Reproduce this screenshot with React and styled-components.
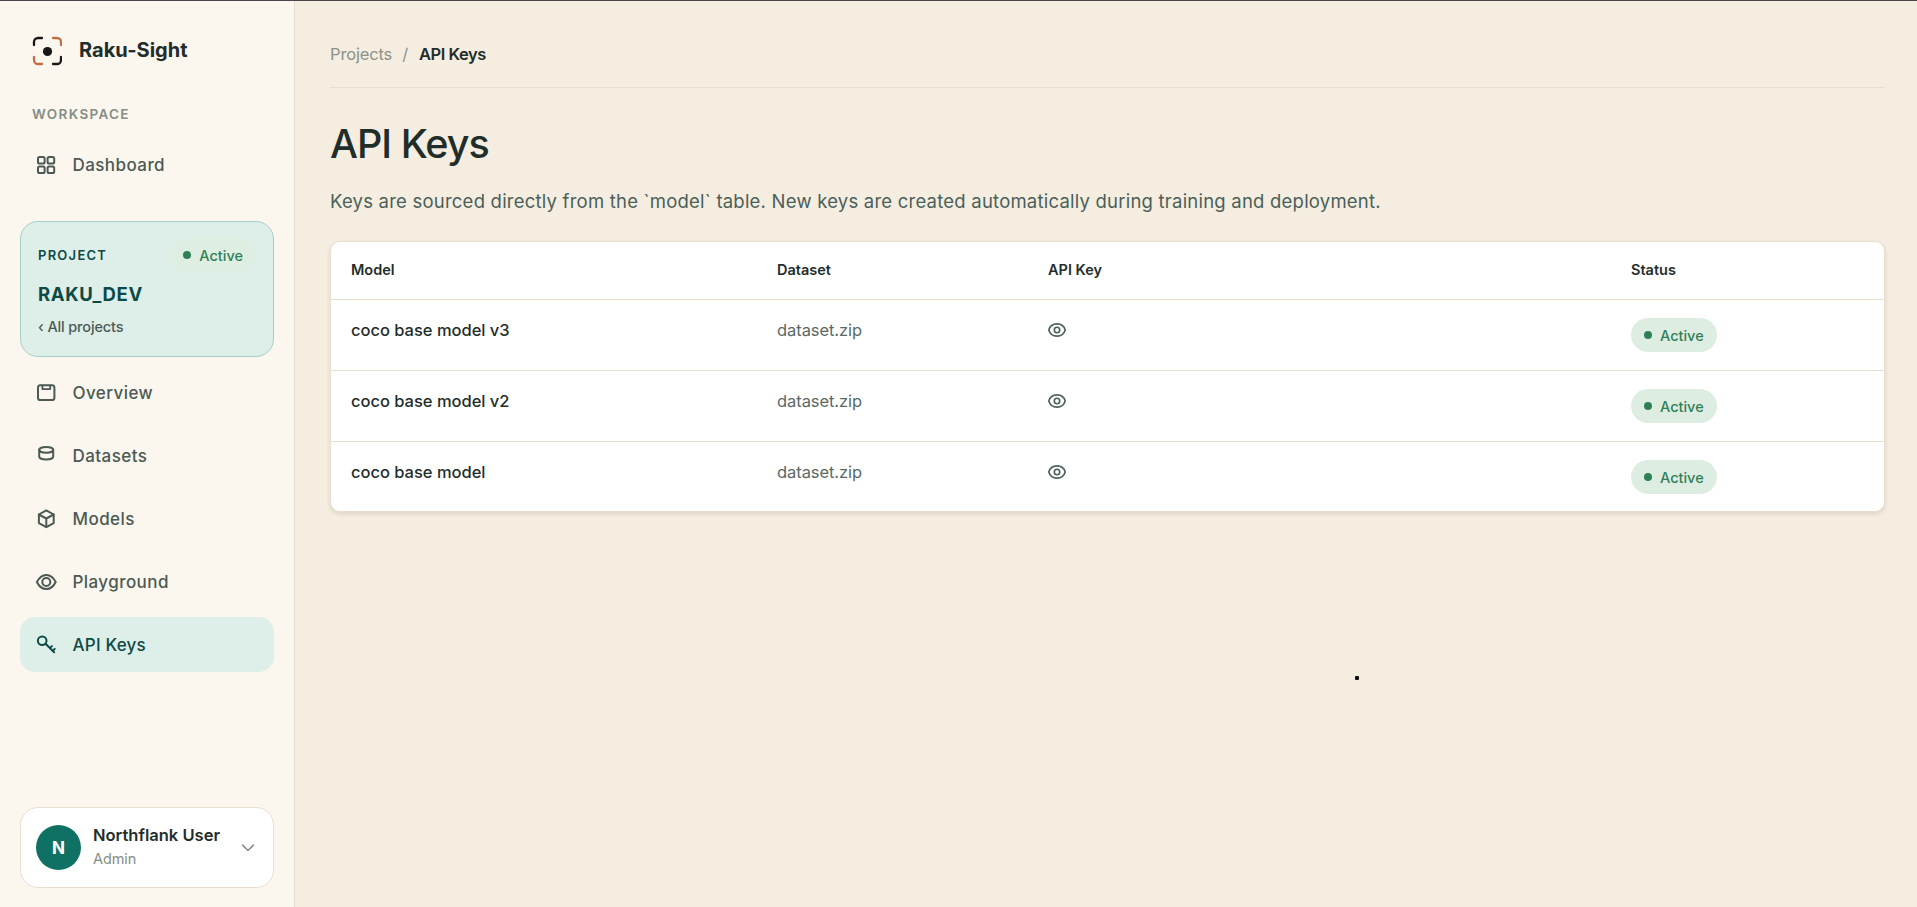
import styled, { createGlobalStyle } from "styled-components";

const GlobalStyle = createGlobalStyle`
  * {
    box-sizing: border-box;
  }

  body {
    margin: 0;
    font-family: Inter, "Liberation Sans", sans-serif;
    color: #1f2d2b;
    background: #f4ede0;
  }
`;

const Page = styled.div`
  display: flex;
  height: 100vh;
  overflow: hidden;
  border-top: 1px solid #4a454d;
`;

const Sidebar = styled.aside`
  display: flex;
  flex-direction: column;
  width: 295px;
  padding: 34px 20px 19px;
  background: #fbf6ee;
  border-right: 1px solid #e8dfcf;
`;

const Brand = styled.div`
  display: flex;
  align-items: center;
  gap: 17px;
  height: 31px;
  padding-left: 12px;
  font-size: 20px;
  font-weight: 700;
  letter-spacing: 0.04px;

  span {
    position: relative;
    top: -1px;
  }
`;

const SectionLabel = styled.div`
  margin: 39px 0 0 12px;
  font-size: 13.5px;
  line-height: 18px;
  font-weight: 600;
  letter-spacing: 1.32px;
  color: #858d84;
`;

const NavItem = styled.a`
  display: flex;
  flex: none;
  align-items: center;
  gap: 16.5px;
  height: 55px;
  padding-left: 16px;
  border-radius: 15px;
  font-size: 17px;
  font-weight: 500;
  letter-spacing: ${({ $active }) => ($active ? "0.22px" : "0.43px")};
  color: ${({ $active }) => ($active ? "#0d4a45" : "#4b5a54")};
  background: ${({ $active }) => ($active ? "#deeee8" : "transparent")};

  svg {
    flex: none;
    overflow: visible;
    fill: none;
    stroke: currentColor;
    stroke-width: 2;
    stroke-linecap: round;
    stroke-linejoin: round;
  }
`;

const WorkspaceNav = styled.nav`
  margin: 14px 0 29px;
`;

const ProjectNav = styled.nav`
  display: flex;
  flex-direction: column;
  gap: 8px;
  margin-top: 8.4px;
`;

const ProjectCard = styled.div`
  flex: none;
  height: 136px;
  padding: 16px 17px 0 17px;
  border: 1px solid #a5cfc8;
  border-radius: 18px;
  background: #deeee8;
  color: #0d4a45;
`;

const ProjectTop = styled.div`
  display: flex;
  align-items: center;
  justify-content: space-between;
  font-size: 13px;
  font-weight: 600;
  letter-spacing: 1.25px;
`;

const ProjectName = styled.div`
  margin-top: 9px;
  font-size: 18.5px;
  line-height: 26px;
  font-weight: 700;
  letter-spacing: 0.65px;
`;

const BackLink = styled.a`
  display: block;
  margin-top: 10px;
  font-size: 14.5px;
  line-height: 20px;
  font-weight: 500;
  letter-spacing: -0.14px;
  color: #4b5a54;
`;

const Pill = styled.span`
  display: inline-flex;
  align-items: center;
  gap: 8px;
  height: 34px;
  padding: 0 13px;
  border-radius: 18px;
  font-size: 14.5px;
  font-weight: 500;
  letter-spacing: 0;
  color: #2f8057;
  background: ${({ $soft }) => ($soft ? "#deeee2" : "#deede2")};

  &::before {
    content: "";
    width: 8px;
    height: 8px;
    border-radius: 50%;
    background: #2f8057;
  }
`;

const UserCard = styled.div`
  display: flex;
  align-items: center;
  height: 81px;
  margin-top: auto;
  padding: 0 18px 0 15px;
  border: 1px solid #e8dfcf;
  border-radius: 18px;
  background: #fff;

  svg {
    margin-left: auto;
  }
`;

const Avatar = styled.div`
  display: grid;
  place-items: center;
  width: 45px;
  height: 45px;
  margin-right: 12px;
  border-radius: 50%;
  background: #0f7163;
  color: #fff;
  font-size: 17px;
  font-weight: 700;
`;

const UserName = styled.div`
  font-size: 16.5px;
  line-height: 23px;
  font-weight: 600;
  letter-spacing: 0.02px;
  white-space: nowrap;
`;

const UserRole = styled.div`
  padding-bottom: 1px;
  font-size: 14.5px;
  line-height: 23px;
  letter-spacing: -0.1px;
  color: #858d84;
`;

const Main = styled.main`
  flex: 1;
  padding: 0 32px 0 35px;
`;

const Breadcrumb = styled.div`
  display: flex;
  align-items: center;
  gap: 10px;
  height: 87px;
  padding-top: 19px;
  border-bottom: 1px solid #e8dfcf;
  font-size: 16.5px;
  letter-spacing: -0.15px;
  color: #8c9389;

  strong {
    margin-left: 1px;
    font-weight: 600;
    letter-spacing: -0.45px;
    color: #1f2d2b;
  }
`;

const Title = styled.h1`
  margin: 32px 0 0;
  font-size: 39.5px;
  line-height: 48px;
  font-weight: 550;
  letter-spacing: -1px;
`;

const Lead = styled.p`
  margin: 19px 0 26px;
  font-size: 18.5px;
  line-height: 28px;
  letter-spacing: 0.22px;
  color: #4b5f5a;
`;

const Table = styled.div`
  border: 1px solid #e8dfcf;
  border-radius: 10px;
  background: #fff;
  box-shadow: 0 2px 4px rgba(80, 70, 40, 0.14);
`;

const Row = styled.div`
  display: grid;
  grid-template-columns: 426px 271px 583px 1fr;
  align-items: start;
  height: 71px;
  padding: 18px 20px 0;
  border-bottom: 1px solid #e8dfcf;
  font-size: 16.5px;
  line-height: 25px;

  &:last-child {
    height: 69px;
    border-bottom: 0;
  }
`;

const HeadRow = styled(Row)`
  height: 58px;
  padding-top: 15px;
  font-size: 14.5px;
  font-weight: 600;
`;

const ModelCell = styled.div`
  font-weight: 450;
  letter-spacing: -0.02px;
`;

const DatasetCell = styled.div`
  letter-spacing: -0.07px;
  color: #5a6964;
`;

const KeyCell = styled.div`
  display: flex;
  align-items: center;
  height: 24px;
`;

const Speck = styled.div`
  position: absolute;
  left: 1355px;
  top: 676px;
  width: 4px;
  height: 4px;
  border-radius: 1px;
  background: #111;
`;

function Logo() {
  return (
    <svg width="30" height="30" viewBox="0 0 30 30" fill="none" strokeWidth="2.3" strokeLinecap="round">
      <path d="M2 9V6a4 4 0 0 1 4-4h4" stroke="#181818" />
      <path d="M21 2h4a4 4 0 0 1 4 4v3" stroke="#c46e47" />
      <path d="M2 21v3a4 4 0 0 0 4 4h4" stroke="#c46e47" />
      <path d="M21 28h4a4 4 0 0 0 4-4v-3" stroke="#181818" />
      <circle cx="15.5" cy="15.5" r="4.6" fill="#181818" />
    </svg>
  );
}

const icons = {
  dashboard: (
    <>
      <rect x="2" y="1.9" width="6.6" height="6.6" rx="1.6" />
      <rect x="11.6" y="1.9" width="6.6" height="6.6" rx="1.6" />
      <rect x="2" y="11.5" width="6.6" height="6.6" rx="1.6" />
      <rect x="11.6" y="11.5" width="6.6" height="6.6" rx="1.6" />
    </>
  ),
  overview: (
    <>
      <rect x="2" y="2.3" width="16.4" height="14.8" rx="2.4" />
      <path d="M6.4 2.6v3.5h7.8V2.6" strokeWidth="1.8" />
    </>
  ),
  datasets: (
    <>
      <ellipse cx="10.2" cy="3.8" rx="7" ry="2.9" />
      <path d="M3.2 3.8v6.8c0 1.6 3.1 2.9 7 2.9s7-1.3 7-2.9V3.8" />
    </>
  ),
  models: (
    <>
      <path d="M10.3 1.4l7.4 4.1v8.6l-7.4 4.1-7.4-4.1V5.5z" />
      <path d="M2.9 5.5l7.4 4 7.4-4M10.3 9.5v8.5" />
    </>
  ),
  playground: (
    <>
      <path d="M.9 10C3.3 5 6.6 2.9 10.3 2.9S17.3 5 19.7 10c-2.400 5-5.700 7.100-9.400 7.100S3.300 15 .9 10z" />
      <circle cx="10.3" cy="10" r="4" />
    </>
  ),
  keys: (
    <>
      <circle cx="6.2" cy="5.7" r="4.3" />
      <path d="M9.6 8.8l8.5 8.5M13.9 13.1l2-2M16.7 15.9l2-2" />
    </>
  ),
};

function Icon({ name }) {
  return (
    <svg width="20" height="20" viewBox="0 0 20 20">
      {icons[name]}
    </svg>
  );
}

function EyeIcon() {
  return (
    <svg width="18" height="16" viewBox="0 0 18 16" fill="none" stroke="#4b5f5a" strokeWidth="1.6">
      <path d="M.8 8C2 3.7 5.3 1.900 9 1.900S16 3.7 17.2 8C16 12.3 12.7 14.1 9 14.1S2 12.3.8 8z" />
      <circle cx="9" cy="8" r="2.7" />
    </svg>
  );
}

const projectLinks = [
  { label: "Overview", icon: "overview" },
  { label: "Datasets", icon: "datasets" },
  { label: "Models", icon: "models" },
  { label: "Playground", icon: "playground" },
  { label: "API Keys", icon: "keys", active: true },
];

const models = ["coco base model v3", "coco base model v2", "coco base model"];

function App() {
  return (
    <>
      <GlobalStyle />
      <Page>
        <Sidebar>
          <Brand>
            <Logo />
            <span>Raku-Sight</span>
          </Brand>
          <SectionLabel>WORKSPACE</SectionLabel>
          <WorkspaceNav>
            <NavItem>
              <Icon name="dashboard" />
              Dashboard
            </NavItem>
          </WorkspaceNav>
          <ProjectCard>
            <ProjectTop>
              PROJECT
              <Pill $soft>Active</Pill>
            </ProjectTop>
            <ProjectName>RAKU_DEV</ProjectName>
            <BackLink>‹ All projects</BackLink>
          </ProjectCard>
          <ProjectNav>
            {projectLinks.map((link) => (
              <NavItem key={link.label} $active={link.active}>
                <Icon name={link.icon} />
                {link.label}
              </NavItem>
            ))}
          </ProjectNav>
          <UserCard>
            <Avatar>N</Avatar>
            <div>
              <UserName>Northflank User</UserName>
              <UserRole>Admin</UserRole>
            </div>
            <svg width="14" height="8" viewBox="0 0 14 8" fill="none" stroke="#858d84" strokeWidth="1.6">
              <path d="M1.5 1.2L7 6.5l5.5-5.3" strokeLinecap="round" />
            </svg>
          </UserCard>
        </Sidebar>
        <Main>
          <Breadcrumb>
            <span>Projects</span>
            <span>/</span>
            <strong>API Keys</strong>
          </Breadcrumb>
          <Title>API Keys</Title>
          <Lead>
            Keys are sourced directly from the `model` table. New keys are created automatically during training and
            deployment.
          </Lead>
          <Table>
            <HeadRow>
              <div>Model</div>
              <div>Dataset</div>
              <div>API Key</div>
              <div>Status</div>
            </HeadRow>
            {models.map((model) => (
              <Row key={model}>
                <ModelCell>{model}</ModelCell>
                <DatasetCell>dataset.zip</DatasetCell>
                <KeyCell>
                  <EyeIcon />
                </KeyCell>
                <div>
                  <Pill>Active</Pill>
                </div>
              </Row>
            ))}
          </Table>
        </Main>
      </Page>
      <Speck />
    </>
  );
}

export default App;
